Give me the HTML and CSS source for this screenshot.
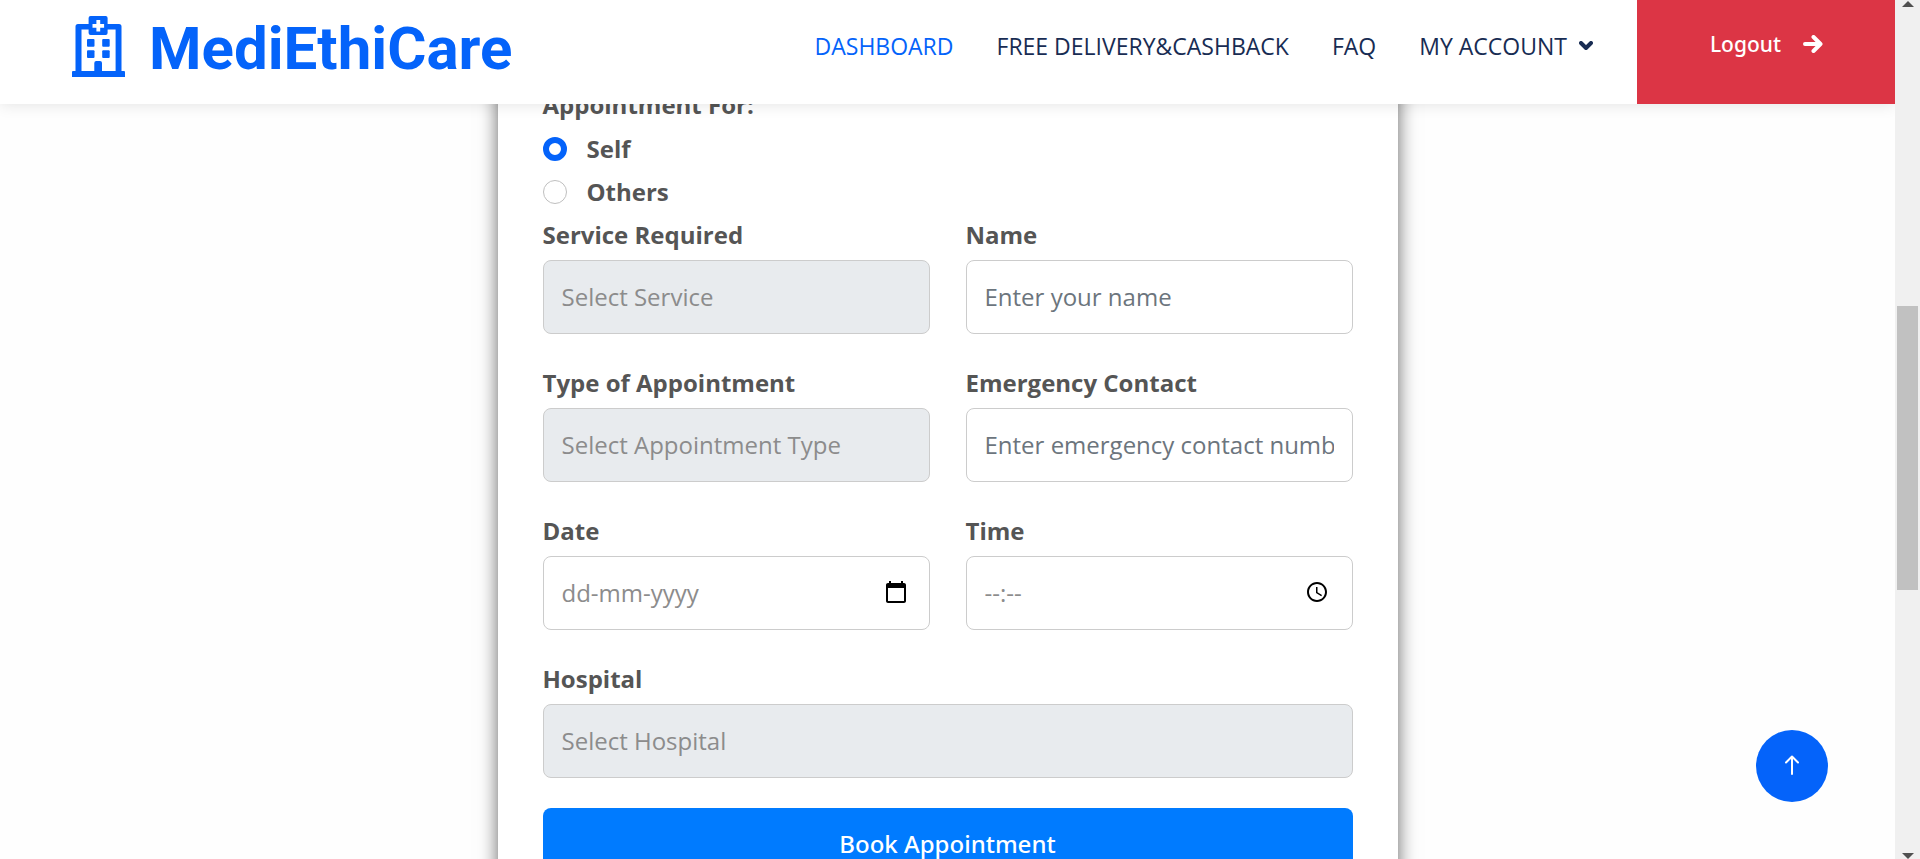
FILE: index.html
```html
<!DOCTYPE html>
<html lang="en">
<head>
<meta charset="utf-8">
<title>MediEthiCare</title>
<link rel="stylesheet" href="styles.css">
</head>
<body>
<div class="viewport">
  <div class="page">
    <header class="header">
      <a class="brand" href="#">
        <svg class="brand-icon" viewBox="0 0 53 61" aria-hidden="true">
          <path fill-rule="evenodd" d="M18.600 0h15a2 2 0 0 1 2 2v6H47a2.500 2.500 0 0 1 2.500 2.500V55H52a1 1 0 0 1 1 1v5H0v-5a1 1 0 0 1 1-1h2.500V10.500A2.500 2.500 0 0 1 6 8h10.600V2a2 2 0 0 1 2-2zM9.500 13.500V55h12.800v-8a2 2 0 0 1 2-2h3.700a2 2 0 0 1 2 2v8h13.600V13.500h-8V17a2 2 0 0 1-2 2h-15a2 2 0 0 1-2-2v-3.500zM24.400 4v4h-3.900v3.700h3.900v3.800h3.800v-3.800h3.900V8h-3.900V4z"/>
          <rect x="15" y="23" width="7.500" height="7.700" rx="1"/>
          <rect x="30.200" y="23" width="7.500" height="7.700" rx="1"/>
          <rect x="15" y="34.200" width="7.500" height="7.700" rx="1"/>
          <rect x="30.200" y="34.200" width="7.500" height="7.700" rx="1"/>
        </svg>
        <span class="brand-name">MediEthiCare</span>
      </a>
      <nav class="nav">
        <a class="nav-link active" href="#">DASHBOARD</a>
        <a class="nav-link" href="#">FREE DELIVERY&amp;CASHBACK</a>
        <a class="nav-link" href="#">FAQ</a>
        <a class="nav-link" href="#">MY ACCOUNT
          <svg class="chevron" viewBox="0 0 14 10" aria-hidden="true"><path d="M2 2l5 5 5-5"/></svg>
        </a>
      </nav>
      <a class="logout" href="#">Logout
        <svg class="logout-icon" viewBox="0 0 20 18" aria-hidden="true"><path d="M2 9h15M10.500 2l7 7-7 7"/></svg>
      </a>
    </header>

    <main class="main">
      <form class="card">
        <fieldset class="choices">
          <legend class="label">Appointment For:</legend>
          <label class="label choice"><input class="radio" type="radio" name="for" checked>Self</label>
          <label class="label choice"><input class="radio" type="radio" name="for">Others</label>
        </fieldset>
        <div class="grid">
          <div class="field">
            <label class="label" for="service">Service Required</label>
            <select class="control" id="service" disabled><option>Select Service</option></select>
          </div>
          <div class="field">
            <label class="label" for="name">Name</label>
            <input class="control" id="name" type="text" placeholder="Enter your name">
          </div>
          <div class="field">
            <label class="label" for="type">Type of Appointment</label>
            <select class="control" id="type" disabled><option>Select Appointment Type</option></select>
          </div>
          <div class="field">
            <label class="label" for="contact">Emergency Contact</label>
            <input class="control" id="contact" type="text" placeholder="Enter emergency contact number">
          </div>
          <div class="field">
            <label class="label" for="date">Date</label>
            <div class="picker">
              <input class="control muted" id="date" type="text" placeholder="dd-mm-yyyy">
              <button class="picker-button" type="button" aria-label="Show date picker">
                <svg class="picker-icon" viewBox="0 0 24 24" aria-hidden="true"><path d="M20 3h-1V1h-2v2H7V1H5v2H4c-1.100 0-2 .9-2 2v16c0 1.100.9 2 2 2h16c1.100 0 2-.9 2-2V5c0-1.100-.9-2-2-2zm0 18H4V8h16v13z"/></svg>
              </button>
            </div>
          </div>
          <div class="field">
            <label class="label" for="time">Time</label>
            <div class="picker">
              <input class="control muted" id="time" type="text" placeholder="--:--">
              <button class="picker-button time" type="button" aria-label="Show time picker">
                <svg class="picker-icon" viewBox="0 0 24 24" aria-hidden="true"><path d="M11.990 2C6.470 2 2 6.480 2 12s4.470 10 9.990 10C17.520 22 22 17.520 22 12S17.520 2 11.990 2zM12 20c-4.420 0-8-3.580-8-8s3.580-8 8-8 8 3.580 8 8-3.580 8-8 8zm.5-13H11v6l5.250 3.150.75-1.230-4.500-2.670z"/></svg>
              </button>
            </div>
          </div>
          <div class="field wide">
            <label class="label" for="hospital">Hospital</label>
            <select class="control" id="hospital" disabled><option>Select Hospital</option></select>
          </div>
        </div>
        <button class="submit" type="button">Book Appointment</button>
      </form>
    </main>

    <button class="to-top" type="button" aria-label="Back to top">
      <svg class="to-top-icon" viewBox="0 0 14 20" aria-hidden="true"><path d="M7 19V1.500M1 7.500l6-6 6 6"/></svg>
    </button>
  </div>

  <div class="scrollbar" aria-hidden="true">
    <span class="arrow up"></span>
    <span class="track-before"></span>
    <span class="thumb"></span>
    <span class="track-after"></span>
    <span class="arrow down"></span>
  </div>
</div>
</body>
</html>
```
FILE: styles.css
```css
* {
  box-sizing: border-box;
}

body {
  margin: 0;
  background: #fefefe;
  color: #555;
  font-family: "Open Sans", "Noto Sans", sans-serif;
  font-size: 24px;
  line-height: 36px;
}

a {
  color: inherit;
  text-decoration: none;
}

.viewport {
  display: flex;
  height: 100vh;
  overflow: hidden;
}

.page {
  position: relative;
  flex: 1;
  min-width: 0;
  overflow: hidden;
}

/* Header */
.header {
  position: absolute;
  inset: 0 0 auto;
  z-index: 2;
  display: flex;
  align-items: stretch;
  height: 104px;
  padding-left: 72px;
  background: #fff;
  box-shadow: 0 0 15px rgba(0, 0, 0, 0.12);
}

.brand,
.nav {
  display: flex;
  align-items: center;
  padding-bottom: 12px;
}

.brand {
  gap: 24px;
  color: #0463fa;
  font: 700 60px/72px Roboto, sans-serif;
}

.brand-name {
  padding-top: 6px;
}

.brand-icon {
  width: 53px;
  height: 61px;
  fill: currentColor;
}

.nav {
  gap: 43px;
  margin-left: auto;
  margin-right: 44px;
  color: #182c53;
  font-size: 23px;
}

.nav-link {
  display: flex;
  align-items: center;
  gap: 12px;
}

.nav-link.active {
  color: #0463fa;
}

.chevron {
  width: 14px;
  height: 10px;
}

.chevron,
.logout-icon,
.to-top-icon {
  fill: none;
  stroke: currentColor;
  stroke-width: 4px;
  stroke-linecap: round;
  stroke-linejoin: round;
}

.logout {
  display: flex;
  align-items: center;
  gap: 22px;
  padding: 0 72px 16px 73px;
  background: #dc3545;
  color: #fff;
  font-family: "Noto Sans", "Open Sans", sans-serif;
  font-size: 21px;
  font-weight: 500;
}

.logout-icon {
  width: 20px;
  height: 18px;
}

/* Booking form */
.main {
  display: flex;
  justify-content: center;
}

.card {
  width: 900px;
  padding: 87px 45px 45px;
  background: #fff;
  box-shadow: 0 0 18px rgba(0, 0, 0, 0.6);
}

.choices {
  margin: 0;
  padding: 0;
  border: 0;
}

.label {
  display: block;
  margin-bottom: 7px;
  padding: 0;
  font-weight: 700;
}

.choices legend.label {
  margin-bottom: 8px;
}

.choice {
  display: flex;
  align-items: center;
  gap: 20px;
}

.radio {
  appearance: none;
  width: 24px;
  height: 24px;
  margin: 0;
  border: 1px solid #bfbfbf;
  border-radius: 50%;
  background: #fff;
}

.radio:checked {
  border: 6px solid #0463fa;
}

.grid {
  display: grid;
  grid-template-columns: 1fr 1fr;
  gap: 31px 36px;
}

.wide {
  grid-column: 1 / -1;
}

.control {
  display: block;
  appearance: none;
  width: 100%;
  height: 74px;
  padding: 0 18px;
  border: 1px solid #ccc;
  border-radius: 8px;
  background: #fff;
  color: #555;
  font: inherit;
}

input.control {
  padding-bottom: 2px;
}

.control::placeholder {
  color: #6c757d;
  opacity: 1;
}

.control.muted::placeholder {
  color: #8c8c8c;
}

.control:disabled {
  background: #e8ebee;
  color: #8c8c8c;
  opacity: 1;
}

.picker {
  position: relative;
}

.picker-button {
  position: absolute;
  top: 24px;
  right: 22px;
  display: flex;
  padding: 0;
  border: 0;
  background: none;
}

.picker-button.time {
  right: 24px;
}

.picker-icon {
  width: 24px;
  height: 24px;
  fill: #000;
}

.submit {
  display: block;
  width: 100%;
  margin-top: 30px;
  padding: 22px;
  border: 0;
  border-radius: 8px;
  background: #007bff;
  color: #fff;
  font: 500 24px/28px "Noto Sans", "Open Sans", sans-serif;
}

/* Back to top */
.to-top {
  position: absolute;
  right: 67px;
  bottom: 57px;
  display: flex;
  align-items: center;
  justify-content: center;
  width: 72px;
  height: 72px;
  padding: 0 0 3px;
  border: 0;
  border-radius: 50%;
  background: #0463fa;
  color: #fff;
}

.to-top-icon {
  width: 14px;
  height: 20px;
  stroke-width: 2px;
}

/* Scrollbar */
.scrollbar {
  display: flex;
  flex-direction: column;
  align-items: center;
  width: 25px;
  padding: 1px 2px 0;
  background: #f0f0f0;
}

.arrow {
  border: 6px solid transparent;
}

.arrow.up {
  border-top: 0;
  border-bottom-color: #505050;
}

.arrow.down {
  border-bottom: 0;
  border-top-color: #505050;
}

.track-before {
  flex: 299;
}

.thumb {
  flex: 284;
  width: 100%;
  background: #c1c1c1;
}

.track-after {
  flex: 263;
}
```
